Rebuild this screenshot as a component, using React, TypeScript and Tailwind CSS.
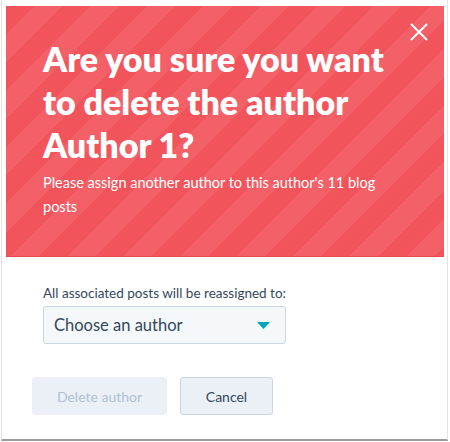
import { X } from "lucide-react";

export default function App() {
    return (
        <div className="w-[450px] h-[442px] bg-white" style={{ fontFamily: "Lato, 'Open Sans', sans-serif" }}>
            <div className="ml-[1px] w-[447px] h-[441px] border-x border-[#e3e3e3] border-b-2 border-b-[#9c9c9c] pt-[6px] pl-[4px] pr-[3px]">
                {/* Header */}
                <div className="relative h-[251px] bg-[#f2545b] bg-[repeating-linear-gradient(135deg,#f2545b_0px,#f2545b_20px,#f36068_20px,#f36068_40px)] border-b border-[#e94a52] px-[37px] pt-[31px]">
                    <button className="absolute top-[11px] right-[10px] text-white">
                        <X className="w-[30px] h-[30px]" strokeWidth={1.6} />
                    </button>
                    <h1 className="text-white font-extrabold text-[34px] leading-[43px]">
                        Are you sure you want to delete the author Author 1?
                    </h1>
                    <p className="mt-[5px] text-white text-[14.5px] leading-[24px] max-w-[340px]">
                        Please assign another author to this author's 11 blog posts
                    </p>
                </div>

                {/* Body */}
                <div className="pl-[37px] pt-[27px]">
                    <label className="block text-[#33475b] text-[13.5px] leading-[18px]">
                        All associated posts will be reassigned to:
                    </label>
                    <div className="mt-[4px] w-[243px] h-[38px] flex items-center justify-between bg-[#f5f8fa] border border-[#cbd6e2] rounded-[3px] pl-[10px] pr-[15px]">
                        <span className="text-[#33475b] text-[16.5px]">Choose an author</span>
                        <svg width="13" height="7" viewBox="0 0 13 7">
                            <path d="M0 0 H13 L6.5 7 Z" fill="#00a4bd" />
                        </svg>
                    </div>
                </div>

                <div className="flex gap-[13px] pl-[26px] pt-[33px]">
                    <button className="w-[135px] h-[38px] rounded-[3px] bg-[#eaf0f6] text-[#b0c1d4] text-[14px]">
                        Delete author
                    </button>
                    <button className="w-[93px] h-[38px] rounded-[3px] bg-[#eaf0f6] border border-[#cbd6e2] text-[#33475b] text-[14px]">
                        Cancel
                    </button>
                </div>
            </div>
        </div>
    );
}
